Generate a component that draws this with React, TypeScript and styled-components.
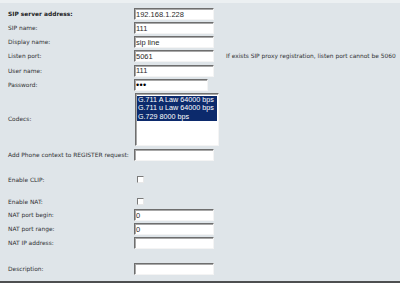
import React from 'react';
import styled, { createGlobalStyle } from 'styled-components';

const GlobalStyle = createGlobalStyle`
  html, body {
    margin: 0;
    padding: 0;
    background: #dfe5e9;
  }
`;

const Page = styled.div`
  box-sizing: border-box;
  width: 400px;
  height: 283px;
  overflow: hidden;
  background: #dfe5e9;
  border-top: 3px solid #ecf0f2;
  border-bottom: 2px solid #4d4f50;
  padding: 4px 0 0 8px;
  font-family: 'DejaVu Sans', Verdana, sans-serif;
  font-size: 5.9px;
  color: #2f3133;
`;

const Row = styled.div<{ $h: number }>`
  display: flex;
  align-items: center;
  height: ${p => p.$h}px;
`;

const Label = styled.div<{ $bold?: boolean }>`
  width: 126px;
  flex: none;
  font-weight: ${p => (p.$bold ? 'bold' : 'normal')};
  color: ${p => (p.$bold ? '#1c1d1e' : 'inherit')};
  white-space: nowrap;
`;

const Field = styled.div`
  width: 92px;
  flex: none;
  display: flex;
  align-items: center;
`;

const Hint = styled.div`
  white-space: nowrap;
`;

const TextBox = styled.input<{ $w?: number; $secret?: boolean }>`
  box-sizing: border-box;
  width: ${p => p.$w ?? 80}px;
  height: 12px;
  margin: 0;
  padding: 0 1px;
  border: 1px solid;
  border-color: #6e6e6e #f4f4f4 #f4f4f4 #6e6e6e;
  box-shadow: inset 1px 1px 0 #a8a8a8;
  background: #ffffff;
  font-family: 'Liberation Sans', Arial, sans-serif;
  font-size: ${p => (p.$secret ? '9px' : '7.5px')};
  letter-spacing: ${p => (p.$secret ? '0.3px' : 'normal')};
  color: ${p => (p.$secret ? '#000000' : '#2a2a2a')};
  outline: none;
`;

const ListBox = styled.div`
  box-sizing: border-box;
  width: 84px;
  height: 53px;
  margin-left: 1px;
  padding: 2px 1px;
  border: 1px solid;
  border-color: #6e6e6e #f4f4f4 #f4f4f4 #6e6e6e;
  box-shadow: inset 1px 1px 0 #a8a8a8;
  background: #ffffff;
  font-family: 'Liberation Sans', Arial, sans-serif;
  font-size: 7.2px;
`;

const Option = styled.div<{ $selected?: boolean }>`
  height: 8.5px;
  line-height: 8.5px;
  padding-left: 1px;
  white-space: nowrap;
  background: ${p => (p.$selected ? '#0c2a6c' : 'transparent')};
  color: ${p => (p.$selected ? '#ffffff' : '#1a1a1a')};
`;

const CheckBox = styled.span`
  box-sizing: border-box;
  display: block;
  width: 7px;
  height: 7px;
  margin-left: 3px;
  border: 1px solid;
  border-color: #7a7a7a #e8e8e8 #e8e8e8 #7a7a7a;
  background: #ffffff;
`;

const codecs = ['G.711 A Law 64000 bps', 'G.711 u Law 64000 bps', 'G.729 8000 bps'];

export default function App() {
  return (
    <Page>
      <GlobalStyle />
      <Row $h={14}>
        <Label $bold>SIP server address:</Label>
        <Field><TextBox readOnly value="192.168.1.228" /></Field>
      </Row>
      <Row $h={14}>
        <Label>SIP name:</Label>
        <Field><TextBox readOnly value="111" /></Field>
      </Row>
      <Row $h={14}>
        <Label>Display name:</Label>
        <Field><TextBox readOnly value="sip line" /></Field>
      </Row>
      <Row $h={14}>
        <Label>Listen port:</Label>
        <Field><TextBox readOnly value="5061" /></Field>
        <Hint>If exists SIP proxy registration, listen port cannot be 5060</Hint>
      </Row>
      <Row $h={15}>
        <Label>User name:</Label>
        <Field><TextBox readOnly value="111" /></Field>
      </Row>
      <Row $h={14}>
        <Label>Password:</Label>
        <Field><TextBox type="password" readOnly value="111" $w={74} $secret /></Field>
      </Row>
      <Row $h={54}>
        <Label>Codecs:</Label>
        <Field>
          <ListBox>
            {codecs.map(c => (
              <Option key={c} $selected>{c}</Option>
            ))}
          </ListBox>
        </Field>
      </Row>
      <Row $h={18}>
        <Label>Add Phone context to REGISTER request:</Label>
        <Field><TextBox readOnly value="" /></Field>
      </Row>
      <Row $h={31}>
        <Label>Enable CLIP:</Label>
        <Field><CheckBox /></Field>
      </Row>
      <Row $h={13}>
        <Label>Enable NAT:</Label>
        <Field><CheckBox /></Field>
      </Row>
      <Row $h={14}>
        <Label>NAT port begin:</Label>
        <Field><TextBox readOnly value="0" /></Field>
      </Row>
      <Row $h={14}>
        <Label>NAT port range:</Label>
        <Field><TextBox readOnly value="0" /></Field>
      </Row>
      <Row $h={14}>
        <Label>NAT IP address:</Label>
        <Field><TextBox readOnly value="" /></Field>
      </Row>
      <Row $h={12} />
      <Row $h={13}>
        <Label>Description:</Label>
        <Field><TextBox readOnly value="" /></Field>
      </Row>
    </Page>
  );
}
